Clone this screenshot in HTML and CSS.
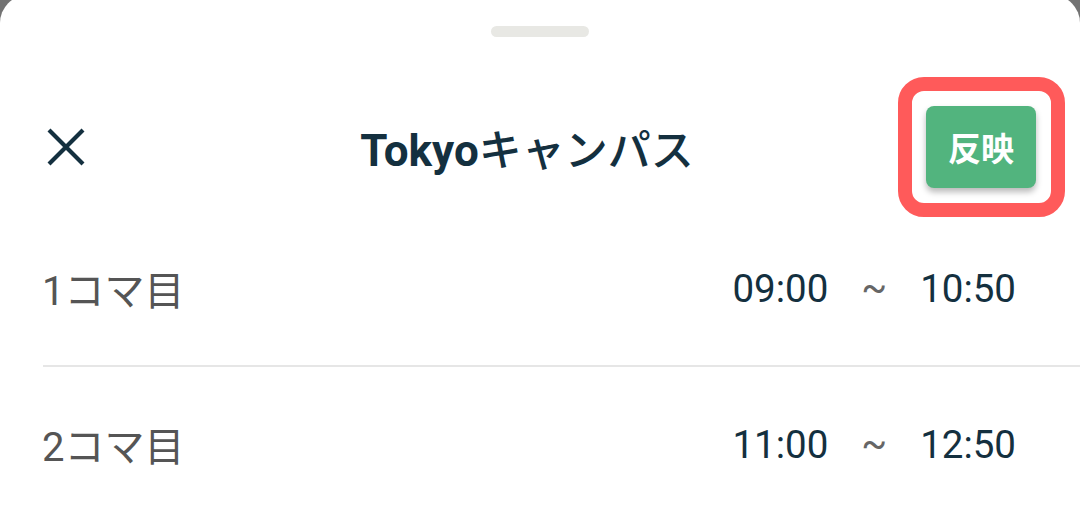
FILE: index.html
```html
<!DOCTYPE html>
<html lang="ja">
<head>
<meta charset="utf-8">
<link rel="stylesheet" href="styles.css">
</head>
<body>
<div class="sheet">
  <div class="handle"></div>
  <div class="header">
    <button class="close" aria-label="閉じる">
      <svg width="38" height="38" viewBox="0 0 38 38"><path d="M2 2 L36 36 M36 2 L2 36" stroke="#14303f" stroke-width="4.2" fill="none"/></svg>
    </button>
    <div class="title">Tokyo<span class="title-kana">キャンパス</span></div>
    <div class="apply-wrap">
      <button class="apply">反映</button>
      <div class="highlight"></div>
    </div>
  </div>
  <div class="row">
    <div class="label">1コマ目</div>
    <div class="times"><span class="time">09:00</span><span class="tilde">~</span><span class="time">10:50</span></div>
  </div>
  <div class="sep"></div>
  <div class="row">
    <div class="label">2コマ目</div>
    <div class="times"><span class="time">11:00</span><span class="tilde">~</span><span class="time">12:50</span></div>
  </div>
</div>
</body>
</html>
```
FILE: styles.css
```css
html, body {
  margin: 0;
  padding: 0;
  height: 100%;
  overflow: hidden;
}
body {
  background: #737373;
  font-family: Roboto, "Noto Sans CJK JP", sans-serif;
}
.sheet {
  margin-top: -5px;
  background: #fff;
  border-radius: 28px 28px 0 0;
  height: 540px;
  display: flex;
  flex-direction: column;
}
.handle {
  align-self: center;
  width: 98px;
  height: 11px;
  border-radius: 6px;
  background: #e8e8e4;
  margin-top: 31px;
}
.header {
  height: 128px;
  padding: 46px 44px 0 47px;
  display: flex;
  align-items: center;
}
.close {
  border: 0;
  background: none;
  padding: 0;
  width: 38px;
  height: 38px;
  display: flex;
}
.title {
  flex: 1;
  text-align: center;
  font-size: 44px;
  font-weight: 700;
  color: #14303f;
  padding-left: 43px;
  white-space: nowrap;
}
.title-kana {
  font-size: 43px;
  font-weight: 500;
}
.apply-wrap {
  position: relative;
  width: 110px;
  height: 82px;
}
.apply {
  width: 110px;
  height: 82px;
  border: 0;
  border-radius: 8px;
  background: #52b47e;
  color: #fff;
  font-family: Roboto, "Noto Sans CJK JP", sans-serif;
  font-size: 33px;
  font-weight: 700;
  box-shadow: 0 4px 6px rgba(0,0,0,0.28);
  padding: 0;
}
.highlight {
  position: absolute;
  top: -29px;
  left: -28px;
  right: -29px;
  bottom: -29px;
  border: 14px solid #ff5a5a;
  border-radius: 26px;
  pointer-events: none;
}
.row {
  height: 154px;
  display: flex;
  align-items: center;
  justify-content: space-between;
  padding: 0 64px 0 42px;
  flex: none;
}
.label {
  font-size: 40px;
  color: #555;
}
.times {
  display: flex;
  align-items: center;
  gap: 33px;
  font-size: 38.5px;
  color: #14303f;
}
.tilde {
  color: #666;
  font-size: 38px;
}
.sep {
  height: 2px;
  background: #e6e6e6;
  margin-left: 43px;
  flex: none;
}
```
